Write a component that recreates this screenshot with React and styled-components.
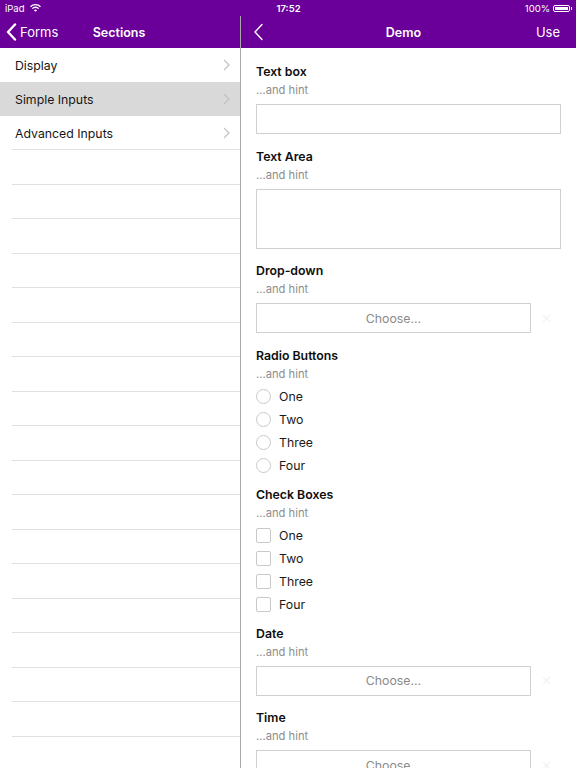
import React from 'react'
import styled, { createGlobalStyle } from 'styled-components'

const PURPLE = '#6a0099'

const GlobalStyle = createGlobalStyle`
  html, body {
    margin: 0;
    padding: 0;
    background: #fff;
  }
  body {
    font-family: Inter, "Noto Sans", "Liberation Sans", sans-serif;
    -webkit-font-smoothing: antialiased;
  }
`

const Screen = styled.div`
  width: 576px;
  height: 768px;
  overflow: hidden;
  display: flex;
  flex-direction: column;
  background: #fff;
`

const StatusBar = styled.div`
  height: 16px;
  flex: none;
  background: ${PURPLE};
  color: #fff;
  font-size: 9.5px;
  display: grid;
  grid-template-columns: 1fr auto 1fr;
  align-items: center;
  padding: 0 4px 0 5px;
`

const StatusLeft = styled.div`
  display: flex;
  align-items: center;
  gap: 5px;
`

const StatusTime = styled.div`
  font-weight: 600;
`

const StatusRight = styled.div`
  display: flex;
  align-items: center;
  justify-content: flex-end;
  gap: 3px;
`

const Battery = styled.div`
  width: 17px;
  height: 7px;
  border: 1px solid #fff;
  border-radius: 2px;
  padding: 1px;
  box-sizing: border-box;
  position: relative;
  margin-right: 2px;

  &::before {
    content: '';
    display: block;
    width: 100%;
    height: 100%;
    background: #fff;
  }
  &::after {
    content: '';
    position: absolute;
    right: -3px;
    top: 1px;
    width: 1.5px;
    height: 3px;
    background: #fff;
  }
`

const Split = styled.div`
  flex: 1;
  display: flex;
  min-height: 0;
`

const Master = styled.div`
  width: 240px;
  flex: none;
  border-right: 1px solid #a9a9a9;
  display: flex;
  flex-direction: column;
  overflow: hidden;
`

const Detail = styled.div`
  flex: 1;
  display: flex;
  flex-direction: column;
  min-width: 0;
  overflow: hidden;
`

const NavBar = styled.div`
  height: 32px;
  flex: none;
  background: ${PURPLE};
  color: #fff;
  display: grid;
  grid-template-columns: 1fr auto 1fr;
  align-items: center;
  padding: 0 ${({ $pad }) => $pad || 8}px 0 6px;
  font-size: 13px;
`

const NavTitle = styled.div`
  font-weight: 600;
  font-size: 12.5px;
`

const NavBack = styled.div`
  display: flex;
  align-items: center;
  gap: 3px;
  padding-left: ${({ $indent }) => $indent || 0}px;
`

const NavAction = styled.div`
  justify-self: end;
`

const List = styled.div`
  display: flex;
  flex-direction: column;
`

const Row = styled.div`
  height: ${({ $h }) => $h || 34}px;
  flex: none;
  box-sizing: border-box;
  display: flex;
  align-items: center;
  justify-content: space-between;
  padding: 0 10px 0 15px;
  font-size: 12.3px;
  color: #161616;
  background: ${({ $selected }) => ($selected ? '#d9d9d9' : '#fff')};
  position: relative;

  &::after {
    content: '';
    display: ${({ $line }) => ($line ? 'block' : 'none')};
    position: absolute;
    left: 12px;
    right: 0;
    bottom: 0;
    height: 1px;
    background: #e0e0e0;
  }
`

const Content = styled.div`
  padding: 15px 15px 0;
  display: flex;
  flex-direction: column;
`

const Field = styled.div`
  display: flex;
  flex-direction: column;
  flex: none;
  margin-bottom: ${({ $tight }) => ($tight ? 9 : 13.5)}px;
`

const Label = styled.div`
  font-size: 12.3px;
  font-weight: 600;
  line-height: 18px;
  color: #0e0e0e;
`

const Hint = styled.div`
  font-size: 11.2px;
  line-height: 18px;
  color: #8e8e8e;
`

const TextBox = styled.div`
  margin-top: 5px;
  height: ${({ $h }) => $h || 30}px;
  border: 1px solid #d0d0d0;
  box-sizing: border-box;
`

const SelectRow = styled.div`
  margin-top: 5px;
  display: flex;
  align-items: center;
`

const SelectBox = styled.div`
  width: 275px;
  height: 30px;
  box-sizing: border-box;
  border: 1px solid #d0d0d0;
  display: flex;
  align-items: center;
  justify-content: center;
  font-size: 12.3px;
  color: #8a8a8a;
`

const ClearSlot = styled.div`
  flex: 1;
  display: flex;
  justify-content: center;
`

const Options = styled.div`
  display: flex;
  flex-direction: column;
  padding-top: 2px;
`

const Option = styled.div`
  height: 23px;
  display: flex;
  align-items: center;
  gap: 8px;
  font-size: 12.3px;
  color: #1a1a1a;
`

const Mark = styled.span`
  width: 15px;
  height: 15px;
  box-sizing: border-box;
  border: 1.5px solid #c9c9c9;
  border-radius: ${({ $round }) => ($round ? '50%' : '2px')};
`

const Chevron = ({ color = '#c4c4c8' }) => (
  <svg width="7" height="12" viewBox="0 0 7 12">
    <path d="M1 1l5 5-5 5" fill="none" stroke={color} strokeWidth="1.3" />
  </svg>
)

const BackChevron = ({ weight = 2.4 }) => (
  <svg width="11" height="18" viewBox="0 0 11 18">
    <path d="M9 1.5L2 9l7 7.5" fill="none" stroke="#fff" strokeWidth={weight} strokeLinecap="round" strokeLinejoin="round" />
  </svg>
)

const Wifi = () => (
  <svg width="11" height="8" viewBox="0 0 11 8">
    <path d="M0.5 2.8a7 7 0 0 1 10 0" fill="none" stroke="#fff" strokeWidth="1.3" />
    <path d="M2.3 4.6a4.5 4.5 0 0 1 6.4 0" fill="none" stroke="#fff" strokeWidth="1.3" />
    <path d="M5.5 7.8L3.9 6.2a2.3 2.3 0 0 1 3.2 0z" fill="#fff" />
  </svg>
)

const ClearIcon = () => (
  <svg width="9" height="9" viewBox="0 0 9 9">
    <path d="M1 1l7 7M8 1L1 8" stroke="#f3f3f3" strokeWidth="1.4" />
  </svg>
)

const sections = ['Display', 'Simple Inputs', 'Advanced Inputs']
const choices = ['One', 'Two', 'Three', 'Four']

const ChooseField = ({ label }) => (
  <Field>
    <Label>{label}</Label>
    <Hint>...and hint</Hint>
    <SelectRow>
      <SelectBox>Choose...</SelectBox>
      <ClearSlot>
        <ClearIcon />
      </ClearSlot>
    </SelectRow>
  </Field>
)

const ChoiceField = ({ label, round }) => (
  <Field $tight>
    <Label>{label}</Label>
    <Hint>...and hint</Hint>
    <Options>
      {choices.map((c) => (
        <Option key={c}>
          <Mark $round={round} />
          {c}
        </Option>
      ))}
    </Options>
  </Field>
)

export default function App() {
  return (
    <Screen>
      <GlobalStyle />
      <StatusBar>
        <StatusLeft>
          <span>iPad</span>
          <Wifi />
        </StatusLeft>
        <StatusTime>17:52</StatusTime>
        <StatusRight>
          <span>100%</span>
          <Battery />
        </StatusRight>
      </StatusBar>
      <Split>
        <Master>
          <NavBar>
            <NavBack>
              <BackChevron />
              <span>Forms</span>
            </NavBack>
            <NavTitle>Sections</NavTitle>
            <span />
          </NavBar>
          <List>
            {sections.map((s, i) => (
              <Row key={s} $selected={i === 1} $line={i === 2}>
                {s}
                <Chevron color={i === 1 ? '#c2c2c2' : '#c4c4c8'} />
              </Row>
            ))}
            {Array.from({ length: 18 }).map((_, i) => (
              <Row key={i} $h={34.5} $line />
            ))}
          </List>
        </Master>
        <Detail>
          <NavBar $pad={16}>
            <NavBack $indent={6}>
              <BackChevron weight={1.4} />
            </NavBack>
            <NavTitle>Demo</NavTitle>
            <NavAction>Use</NavAction>
          </NavBar>
          <Content>
            <Field>
              <Label>Text box</Label>
              <Hint>...and hint</Hint>
              <TextBox />
            </Field>
            <Field>
              <Label>Text Area</Label>
              <Hint>...and hint</Hint>
              <TextBox $h={60} />
            </Field>
            <ChooseField label="Drop-down" />
            <ChoiceField label="Radio Buttons" round />
            <ChoiceField label="Check Boxes" />
            <ChooseField label="Date" />
            <ChooseField label="Time" />
          </Content>
        </Detail>
      </Split>
    </Screen>
  )
}
